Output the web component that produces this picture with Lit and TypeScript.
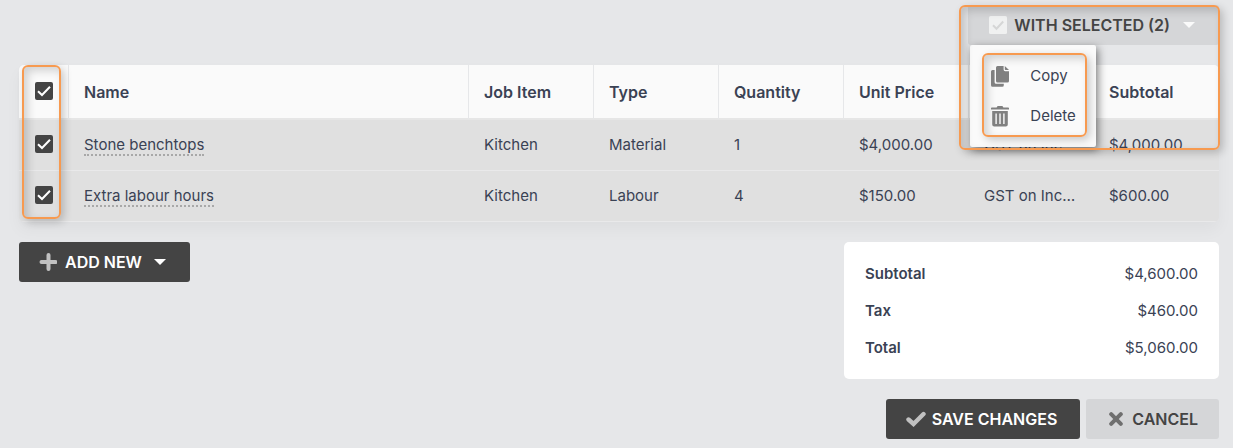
import { LitElement, html, css, svg } from "lit";
import { customElement, state } from "lit/decorators.js";

interface Item {
  name: string;
  job: string;
  type: string;
  qty: number;
  price: string;
  tax: string;
  subtotal: string;
}

const ITEMS: Item[] = [
  { name: "Stone benchtops", job: "Kitchen", type: "Material", qty: 1, price: "$4,000.00", tax: "GST on Income", subtotal: "$4,000.00" },
  { name: "Extra labour hours", job: "Kitchen", type: "Labour", qty: 4, price: "$150.00", tax: "GST on Income", subtotal: "$600.00" },
];

const TOTALS = [
  ["Subtotal", "$4,600.00"],
  ["Tax", "$460.00"],
  ["Total", "$5,060.00"],
];

const icon = (w: number, h: number, body: unknown) =>
  html`<svg width=${w} height=${h} viewBox="0 0 ${w} ${h}" aria-hidden="true">${body}</svg>`;

const caret = icon(12, 6, svg`<path d="M0 0H12L6 6Z" fill="currentColor"/>`);
const plus = icon(18, 18, svg`<path d="M9.5 2V16M2.5 9H16.5" stroke="#c1c1c1" stroke-width="4" stroke-linecap="round"/>`);
const tick = icon(20, 16, svg`<path d="M2.5 8.5L7.5 13L17.5 3" fill="none" stroke="#c1c1c1" stroke-width="4.4" stroke-linecap="round" stroke-linejoin="miter"/>`);
const cross = icon(14, 14, svg`<path d="M2.2 2.2L11.8 11.8M11.8 2.2L2.2 11.8" stroke="#6f6f6f" stroke-width="4" stroke-linecap="round"/>`);
const boxTick = icon(18, 18, svg`<rect width="18" height="18" rx="1.5" fill="#f0f1f1"/><path d="M4 9.2L7.5 12.7L14.2 5.5" fill="none" stroke="#d5d6d6" stroke-width="2"/>`);
const copy = icon(18, 21, svg`<path d="M1.5 4H3.6V16.2Q3.6 17.8 5.2 17.8H12.8V19.3Q12.8 20.8 11.3 20.8H1.5Q0 20.8 0 19.3V5.5Q0 4 1.5 4Z" fill="#808080"/><path d="M6.5 0H12.6V3.6Q12.6 5.2 14.2 5.2H18V15Q18 16.6 16.4 16.6H6.5Q5 16.6 5 15V1.5Q5 0 6.5 0ZM13.8 0L18 4H14.6Q13.8 4 13.8 3.2Z" fill="#808080"/>`);
const trash = icon(18, 21, svg`<path d="M0 2.2Q0 1.4 0.8 1.4H5.6L6.6 0H11.4L12.4 1.4H17.2Q18 1.4 18 2.2V3.6H0Z" fill="#808080"/><path fill-rule="evenodd" d="M1.2 5H16.8V18.6Q16.8 20.6 14.8 20.6H3.2Q1.2 20.6 1.2 18.6ZM4.4 7.4V18H5.8V7.4ZM8.3 7.4V18H9.7V7.4ZM12.2 7.4V18H13.6V7.4Z" fill="#808080"/>`);

@customElement("app-root")
export class AppRoot extends LitElement {
  @state() private selected = [true, true];

  static styles = css`
    :host {
      display: block;
      min-height: 100vh;
      box-sizing: border-box;
      padding: 5px 14px 9px 19px;
      background: #e6e7e9;
      color: #3a4254;
      font: 15px/20px Inter, "Liberation Sans", sans-serif;
    }
    * { box-sizing: border-box; }
    svg { display: block; flex: none; }
    button {
      display: inline-flex;
      align-items: center;
      height: 40px;
      margin: 0;
      border: 0;
      border-radius: 3px;
      padding: 0 20px;
      font: 600 16px/20px Inter, "Liberation Sans", sans-serif;
      white-space: nowrap;
      cursor: pointer;
    }
    .dark { background: #444; color: #fff; }
    .light { background: #d5d6d8; color: #444; }
    .toolbar { display: flex; justify-content: flex-end; margin-bottom: 20px; }
    .bulk { position: relative; z-index: 2; }
    .bulk-button { gap: 7px; padding: 0 24px 0 21px; }
    .bulk-button .caret { color: #fafafa; margin-left: 6px; }
    .menu {
      position: absolute;
      top: 40px;
      left: 2px;
      width: 126px;
      padding: 8px 9px 10px 12px;
      background: #fafafa;
      border-radius: 2px;
      box-shadow: 2px 3px 9px rgba(0, 0, 0, 0.5);
    }
    .marker {
      border: 2px solid #f79a50;
      border-radius: 6px;
      box-shadow: 3px 3px 8px rgba(0, 0, 0, 0.2), inset 4px 4px 9px rgba(0, 0, 0, 0.16);
      pointer-events: none;
    }
    .bulk-marker { position: absolute; inset: 0 -1px -105px -9px; }
    .check-marker { position: absolute; top: 0; bottom: 3px; left: 3px; width: 39px; }
    .menu-list {
      display: grid;
      gap: 2px;
      margin: 0;
      padding: 2px 0 0;
      list-style: none;
      pointer-events: auto;
    }
    .menu-item {
      width: 100%;
      height: 38px;
      padding: 0 0 0 7px;
      gap: 21px;
      background: none;
      color: #3a4254;
      font-size: 15px;
      font-weight: 400;
    }
    .menu-list li { height: 38px; }
    .grid {
      position: relative;
      border-radius: 5px;
      box-shadow: 0 8px 16px rgba(0, 0, 0, 0.04);
    }
    table {
      width: 100%;
      table-layout: fixed;
      border-spacing: 0;
      border-radius: 5px;
      overflow: hidden;
    }
    th, td {
      padding: 0 15px;
      text-align: left;
      white-space: nowrap;
      overflow: hidden;
      text-overflow: ellipsis;
    }
    th {
      height: 55px;
      background: #fafafa;
      border-right: 1px solid #e6e7e9;
      border-bottom: 2px solid #e6e6e6;
      font-size: 16px;
      font-weight: 600;
    }
    th:last-child { border-right: 0; }
    td { height: 51px; background: #e0e0e0; border-bottom: 1px solid #e9e9ea; }
    .pick { width: 50px; padding: 0 0 2px; text-align: center; }
    .col { width: 125px; }
    .check {
      appearance: none;
      display: block;
      width: 18px;
      height: 18px;
      margin: 0 auto;
      border: 2px solid #444;
      border-radius: 2px;
    }
    .check:checked {
      background: #444 url("data:image/svg+xml,%3Csvg xmlns='http://www.w3.org/2000/svg' viewBox='0 0 18 18'%3E%3Cpath d='M3 9.2L7 13L15 4.8' fill='none' stroke='white' stroke-width='2'/%3E%3C/svg%3E") center / 18px 18px no-repeat;
    }
    .name { display: inline-block; height: 21px; color: inherit; text-decoration: none; border-bottom: 2px dotted #a8a8a8; }
    .lower { display: flex; justify-content: space-between; align-items: flex-start; margin-top: 20px; }
    .add { gap: 8px; padding-right: 24px; }
    .add .caret { margin-left: 4px; }
    .totals {
      width: 375px;
      margin: 0;
      padding: 13px 21px;
      background: #fff;
      border-radius: 5px;
    }
    .line { display: flex; justify-content: space-between; align-items: center; height: 37px; }
    dt { font-weight: 600; }
    dd { margin: 0; }
    .actions { display: flex; justify-content: flex-end; gap: 6px; margin-top: 20px; }
    .save { gap: 6px; padding-right: 23px; }
    .cancel { gap: 9px; padding: 0 21px 0 23px; }
  `;

  private toggle(i: number) {
    this.selected = this.selected.map((v, n) => (n === i ? !v : v));
  }

  private toggleAll(e: Event) {
    const on = (e.target as HTMLInputElement).checked;
    this.selected = this.selected.map(() => on);
  }

  render() {
    const count = this.selected.filter(Boolean).length;
    return html`
      <div class="toolbar">
        <div class="bulk">
          <button class="light bulk-button" aria-haspopup="true" aria-expanded="true">
            ${boxTick}<span>WITH SELECTED (${count})</span><span class="caret">${caret}</span>
          </button>
          <div class="menu">
            <ul class="menu-list marker">
              <li><button class="menu-item">${copy}<span>Copy</span></button></li>
              <li><button class="menu-item">${trash}<span>Delete</span></button></li>
            </ul>
          </div>
          <div class="marker bulk-marker"></div>
        </div>
      </div>

      <div class="grid">
        <table>
          <thead>
            <tr>
              <th class="pick"><input class="check" type="checkbox" aria-label="Select all" .checked=${count === ITEMS.length} @change=${this.toggleAll} /></th>
              <th>Name</th>
              <th class="col">Job Item</th>
              <th class="col">Type</th>
              <th class="col">Quantity</th>
              <th class="col">Unit Price</th>
              <th class="col">Tax</th>
              <th class="col">Subtotal</th>
            </tr>
          </thead>
          <tbody>
            ${ITEMS.map((r, i) => html`
              <tr>
                <td class="pick"><input class="check" type="checkbox" aria-label=${r.name} .checked=${this.selected[i]} @change=${() => this.toggle(i)} /></td>
                <td><a class="name" href="#">${r.name}</a></td>
                <td>${r.job}</td>
                <td>${r.type}</td>
                <td>${r.qty}</td>
                <td>${r.price}</td>
                <td>${r.tax}</td>
                <td>${r.subtotal}</td>
              </tr>`)}
          </tbody>
        </table>
        <div class="marker check-marker"></div>
      </div>

      <div class="lower">
        <button class="dark add">${plus}<span>ADD NEW</span><span class="caret">${caret}</span></button>
        <dl class="totals">
          ${TOTALS.map(([k, v]) => html`<div class="line"><dt>${k}</dt><dd>${v}</dd></div>`)}
        </dl>
      </div>

      <div class="actions">
        <button class="dark save">${tick}<span>SAVE CHANGES</span></button>
        <button class="light cancel">${cross}<span>CANCEL</span></button>
      </div>
    `;
  }
}
